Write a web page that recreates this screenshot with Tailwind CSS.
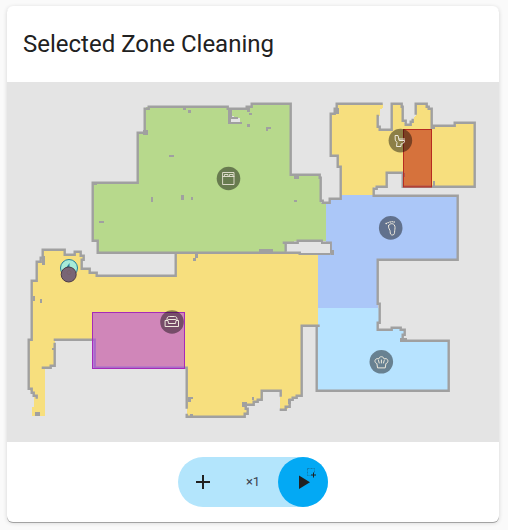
<!DOCTYPE html>
<html lang="en">
<head>
<meta charset="utf-8">
<meta name="viewport" content="width=device-width, initial-scale=1">
<title>Selected Zone Cleaning</title>
<script src="https://cdn.jsdelivr.net/npm/@tailwindcss/browser@4"></script>
</head>
<body class="bg-[#fafafa] pt-1.5 pr-[9px] pb-2 pl-[7px] font-[Roboto,sans-serif] text-[#212121]">
<main class="overflow-hidden rounded-md bg-white shadow-[0_1px_0_#a3a3a3,0_1px_4px_rgba(0,0,0,0.16)]">
  <header class="px-4 py-5">
    <h1 class="text-2xl leading-9 font-normal">Selected Zone Cleaning</h1>
  </header>

  <svg class="block h-auto w-full bg-[#e4e4e4]" viewBox="7 82 492 360" role="img" aria-label="Floor map with two selected zones">
    <!-- Room floors -->
    <g shape-rendering="crispEdges">
      <path fill="#b7d98c" d="M98 252V241H93V182H138V132H145V108L149 106H228V122H240V118L232 116V109H247L252 104H291V175H320L321 203H326V241H297L286 243V252Z"/>
      <path fill="#f7df7e" d="M341 195V167H338V156H331V113H335V109L337 107V104H383V108L380 109V116L378 117V127L380 130H392V104H402L403 107V121L406 125H411L413 120L416 115V104H427L429 108L432 109V127L434 125H455V123H475V187H403V173H387V187H374V195Z"/>
      <path fill="#abc7f8" d="M326 203H330V198H341V195H458V260H378V308H318V254H331V243H326Z"/>
      <path fill="#b7e3ff" d="M318 308H380V323H378V330H392V328H401L402 330H405V335H403V340H448V391H317V325H318Z"/>
      <path fill="#f7df7e" d="M175 253H318V325H302V396H297L290 399V407L286 410H280V391H263V400H258L254 405H247L248 414H245L244 417H187V368H95V340H55V366L45 368V416H32V407H34V396L29 389V340H32V281H37V262H41L43 258V250H65V255H75L76 252H81V256H84V260H82V269H90L91 273H97V276H175Z"/>
    </g>

    <!-- Walls -->
    <g fill="none" stroke="#a0a0a0" stroke-width="2.400" transform="translate(-.3 -.3)">
      <path d="M331 254H300V253H98V241H93V183H138V133H145V109H149V107H228V109H247V107H252V104H291V175H320V178H321V201H323V203H330V199H341V167H338V156H331V114H335V109H337V104H383"/>
      <path d="M378 115V127H380V130H392V104H402V107H403V121H406V125H411V122H413V119M416 115V104H427V107H429V109H432V128H434V126H455V123H475V187H403V173H387V187H377V189H374V196H458V260H378V304H380V323H378V330H392V328H401V330H405V335H403V341H449V391H317V326"/>
      <path d="M320 326H302V396H297V398H293V400H290V407H286V410H280M281 397V391H262V400H258V402H254V405H246V409H248V414H245V417H187V414M187 409V368H95V340H54M55 343V366H51V368H42M37 399V396H34V393H32V389H29V340H32V281H37V262H41V258H43V250H65V255H75V252H81V256H84V260H82V269H90V273H97V276H176V253"/>
      <path d="M283 243H298V241H322V243H331V254M286 243V252"/>
    </g>
    <path fill="#e4e4e4" d="M287 244h12v-2h22v2h9v9h-29v-2h-14zM231 120h9v2h-9z"/>
    <g fill="#a0a0a0" shape-rendering="crispEdges">
      <path d="M228 109h4v8h6v2h-7v3h11v2h-14zM183 107h3v3h-3zM188 110h3v3h-3zM143 130h5v5h-5zM169 155h5v2h-5zM151 197h2v5h-2zM181 195h3v5h-3zM191 197h2v3h-2zM99 221h5v2h-5zM93 183h4v2h-4zM247 106h3v6h-3zM249 113h3v2h-3zM247 124h3v3h-3zM266 127h5v2h-3v2h-2zM294 175h5v4h-5zM294 200h3v2h-3zM259 249h14v4h-14zM331 250h3v5h-3zM335 108h4v6h-4zM433 125h2v4h-2zM433 181h2v6h-2zM402 173h3v4h-3zM400 338h7v4h-7zM195 254h3v4h-3zM193 258h3v3h-3zM33 296h2v5h-2zM40 299h2v4h-2zM42 256h3v9h-3zM52 348h3v2h-3zM35 412h5v4h-5zM188 397h5v2h-2v3h-3zM190 414h3v3h-3zM242 402h5v5h-5zM252 397h2v3h-2zM288 399h3v5h-3z"/>
    </g>

    <!-- Selected zones -->
    <rect x="403.500" y="129.500" width="28" height="57.500" fill="#bd1f0b" fill-opacity=".57" stroke="#b72b20"/>
    <rect x="92.500" y="312.500" width="92" height="56" fill="#b140e8" fill-opacity=".56" stroke="#a52bb9"/>

    <!-- Room markers -->
    <g fill="#000" fill-opacity=".43">
      <circle cx="228.500" cy="178.500" r="11.800"/>
      <circle cx="400.400" cy="140.600" r="11.800"/>
      <circle cx="390.700" cy="227.900" r="11.800"/>
      <circle cx="381.300" cy="361.800" r="11.800"/>
      <circle cx="172" cy="322" r="11.800"/>
    </g>
    <g fill="none" stroke="#eee9dc" stroke-width="1" stroke-linejoin="round" stroke-linecap="round">
      <path d="M223 172.500h11v12h-11zM223 176.500h11M224.500 175.500v-1h3.500v1M229.500 175.500v-1h3.500v1" stroke-opacity=".85"/>
      <path d="M395.500 135.500h2.500l1.200 5h5.300c0 2.200-1.500 3.500-3.500 3.500v2.500h-4.500l.5-4-1.500-2zM399 139h5.500"/>
      <path d="M388.600 225.500c1-2 4-2.500 5.500-.8 1.500 2 .8 4 .6 6s0 4-1.900 4.300c-2 .3-2.800-1.400-2.600-3.300.2-2-2.500-3.500-1.600-6.200z"/>
      <path d="M386 223.500h.5M388 222.700h.3M390 222h.3M392 221.700h.3M394 222h.3" stroke-width="1.300"/>
      <path d="M377.500 367.500l-.6-4c-2.500-.4-2.700-4.300 0-4.800 1-.2 1.300.1 1.800.4.300-3.200 5-3.200 5.400 0 .5-.3 1-.6 2-.4 2.500.5 2.400 4.400-.2 4.800l-.6 4zM378.500 360.500l.7 2.500M381.400 360v3M384.200 360.500l-.7 2.500"/>
      <path d="M167 320.500v-1.500c0-1.500.8-2.500 2.500-2.500h5c1.700 0 2.500 1 2.500 2.500v1.500M165.500 320.500h2.500l.5 3h7l.5-3h2.500v6h-13zM168.500 319.500h7"/>
    </g>

    <!-- Dock and vacuum -->
    <circle cx="69" cy="268" r="8.500" fill="#a7ebd8" stroke="#24809b"/>
    <path d="M69.500 263l-3.500 5 3.500-1z" fill="#24809b"/>
    <circle cx="68.700" cy="274.500" r="7.500" fill="#786576" stroke="#4b3a46"/>
    <circle cx="69" cy="272.500" r="2" fill="none" stroke="#79616b"/>
  </svg>

  <div class="flex justify-center px-4 py-[15px]">
    <div class="flex rounded-full bg-[#b3e5fc]">
      <button type="button" aria-label="Add zone" class="flex size-[50px] items-center justify-center rounded-full">
        <svg class="size-6" viewBox="0 0 24 24" fill="#212121" aria-hidden="true"><path d="M19 13h-6v6h-2v-6H5v-2h6V5h2v6h6z"/></svg>
      </button>
      <button type="button" aria-label="Repeat count ×1" class="flex size-[50px] items-center justify-center rounded-full text-[13px] text-[#3d4450]">×1</button>
      <button type="button" aria-label="Start zone cleaning" class="flex size-[50px] items-center justify-center rounded-full bg-[#03a9f4]">
        <svg class="size-[50px]" viewBox="0 0 50 50" aria-hidden="true">
          <path d="M21 18.500v13.500l11-6.750z" fill="#212121"/>
          <path d="M29.500 11.500h7v4M29.500 11.500v7h3" fill="none" stroke="#176f98" stroke-opacity=".75" stroke-dasharray="2 1"/>
          <path d="M35.500 15.500v5M33 18h5" fill="none" stroke="#212121"/>
        </svg>
      </button>
    </div>
  </div>
</main>
</body>
</html>
